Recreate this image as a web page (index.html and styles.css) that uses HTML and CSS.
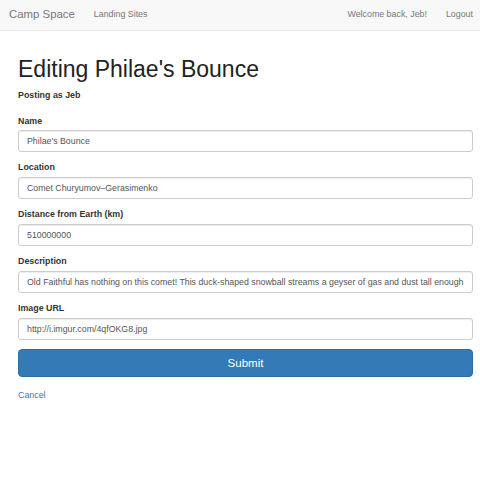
FILE: index.html
```html
<!DOCTYPE html>
<html lang="en">
<head>
<meta charset="utf-8">
<title>Camp Space</title>
<link rel="stylesheet" href="styles.css">
</head>
<body>
<nav class="navbar">
  <a class="brand" href="#">Camp Space</a>
  <a class="nav-link" href="#">Landing Sites</a>
  <div class="nav-right">
    <a class="nav-link" href="#">Welcome back, Jeb!</a>
    <a class="nav-link" href="#">Logout</a>
  </div>
</nav>
<main class="container">
  <h1 class="title">Editing Philae's Bounce</h1>
  <p class="posting">Posting as Jeb</p>
  <form class="form">
    <div class="form-group">
      <label class="label" for="name">Name</label>
      <input class="input" id="name" type="text" value="Philae's Bounce">
    </div>
    <div class="form-group">
      <label class="label" for="location">Location</label>
      <input class="input" id="location" type="text" value="Comet Churyumov–Gerasimenko">
    </div>
    <div class="form-group">
      <label class="label" for="distance">Distance from Earth (km)</label>
      <input class="input" id="distance" type="text" value="510000000">
    </div>
    <div class="form-group">
      <label class="label" for="description">Description</label>
      <input class="input" id="description" type="text" value="Old Faithful has nothing on this comet! This duck-shaped snowball streams a geyser of gas and dust tall enough to see from space.">
    </div>
    <div class="form-group">
      <label class="label" for="image">Image URL</label>
      <input class="input" id="image" type="text" value="http://i.imgur.com/4qfOKG8.jpg">
    </div>
    <button class="submit" type="button">Submit</button>
  </form>
  <a class="cancel" href="#">Cancel</a>
</main>
</body>
</html>
```
FILE: styles.css
```css
* {
  box-sizing: border-box;
}

body {
  margin: 0;
  font-family: "Liberation Sans", Arial, sans-serif;
  font-size: 8.85px;
  line-height: 12.86px;
  color: #333;
  background: #fff;
}

a {
  text-decoration: none;
}

.navbar {
  display: flex;
  align-items: center;
  height: 31px;
  margin-bottom: 13px;
  padding: 0 7px 1px 9px;
  background: #f8f8f8;
  border-bottom: 1px solid #e7e7e7;
}

.brand {
  font-size: 11.4px;
  color: #777;
  margin-right: 19px;
}

.nav-link {
  color: #777;
  font-size: 8.85px;
}

.nav-right {
  margin-left: auto;
  display: flex;
  gap: 19px;
}

.container {
  padding: 13px 7px 0 18px;
}

.title {
  margin: 0 0 6.4px;
  font-size: 23px;
  font-weight: 400;
  line-height: 1.1;
  color: #222;
}

.posting {
  margin: 0 0 13px;
  font-weight: 700;
}

.form-group {
  margin-bottom: 9px;
}

.label {
  display: block;
  margin-bottom: 3px;
  font-weight: 700;
}

.input {
  display: block;
  width: 100%;
  height: 22px;
  padding: 0 8px 0 8px;
  font-family: inherit;
  font-size: 8.8px;
  color: #555;
  background: #fff;
  border: 1px solid #ccc;
  border-radius: 3px;
  box-shadow: inset 0 1px 1px rgba(0, 0, 0, 0.075);
}

.submit {
  display: block;
  width: 100%;
  height: 28px;
  margin-top: 1px;
  font-family: inherit;
  font-size: 11.5px;
  color: #fff;
  background: #337ab7;
  border: 1px solid #2e6da4;
  border-radius: 4px;
}

.cancel {
  display: block;
  margin-top: 12px;
  color: #337ab7;
}
```
